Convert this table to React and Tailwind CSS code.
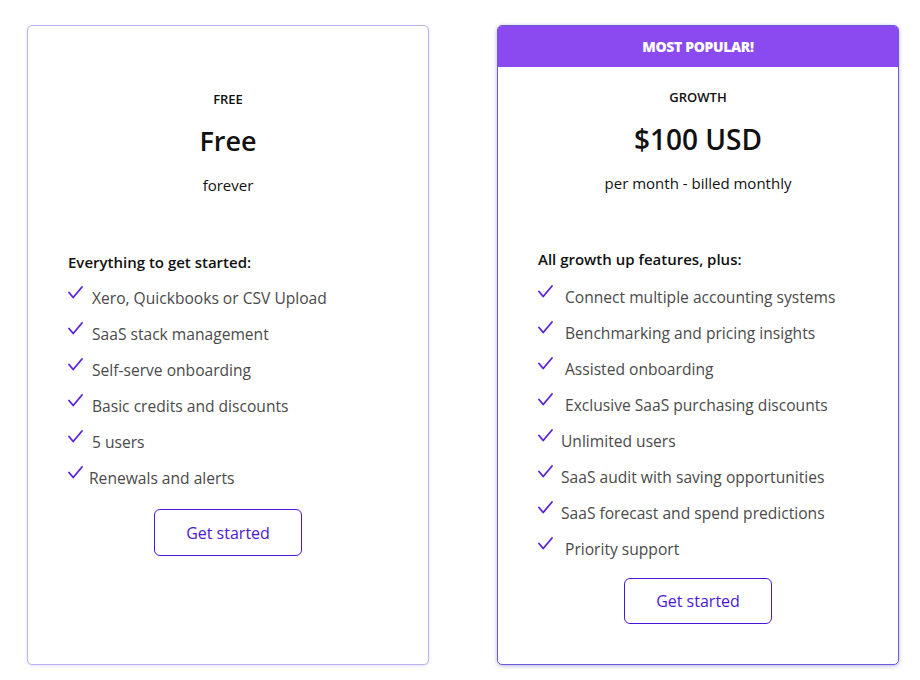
const FONT = { fontFamily: '"Open Sans", "Liberation Sans", sans-serif' };

const freeFeatures = [
  { text: 'Xero, Quickbooks or CSV Upload', pad: 'pl-[9px]' },
  { text: 'SaaS stack management', pad: 'pl-[9px]' },
  { text: 'Self-serve onboarding', pad: 'pl-[9px]' },
  { text: 'Basic credits and discounts', pad: 'pl-[9px]' },
  { text: '5 users', pad: 'pl-[9px]' },
  { text: 'Renewals and alerts', pad: 'pl-[6px]' },
];

const growthFeatures = [
  { text: 'Connect multiple accounting systems', pad: 'pl-[12px]' },
  { text: 'Benchmarking and pricing insights', pad: 'pl-[12px]' },
  { text: 'Assisted onboarding', pad: 'pl-[12px]' },
  { text: 'Exclusive SaaS purchasing discounts', pad: 'pl-[12px]' },
  { text: 'Unlimited users', pad: 'pl-[8px]' },
  { text: 'SaaS audit with saving opportunities', pad: 'pl-[8px]' },
  { text: 'SaaS forecast and spend predictions', pad: 'pl-[8px]' },
  { text: 'Priority support', pad: 'pl-[12px]' },
];

export default function App() {
  return (
    <div className="w-[920px] h-[680px] bg-white flex gap-[68px] pl-[27px] pt-[25px]" style={FONT}>
      <PlanCard
        label="FREE"
        price="Free"
        period="forever"
        heading="Everything to get started:"
        features={freeFeatures}
      />
      <PlanCard
        popular
        label="GROWTH"
        price="$100 USD"
        period="per month - billed monthly"
        heading="All growth up features, plus:"
        features={growthFeatures}
      />
    </div>
  );
}

function PlanCard({ popular, label, price, period, heading, features }) {
  return (
    <div
      className={
        popular
          ? 'w-[402px] h-[640px] rounded-[5px] border border-[#6a5bd6] bg-white overflow-hidden shadow-[0_1px_4px_rgba(60,40,160,0.35)] flex flex-col'
          : 'w-[402px] h-[640px] rounded-[5px] border border-[#bfb0f2] bg-white overflow-hidden shadow-[0_1px_3px_rgba(120,90,220,0.2)] flex flex-col'
      }
    >
      {popular && (
        <div className="h-[41px] bg-[#8a4af0] flex items-center justify-center text-white text-[14px] font-extrabold tracking-tight">
          MOST POPULAR!
        </div>
      )}
      <div className={popular ? 'flex flex-col items-center pt-[22px]' : 'flex flex-col items-center pt-[65px]'}>
        <div className="text-[13px] font-semibold text-[#111] leading-[16px]">{label}</div>
        <div className={popular ? 'mt-[18px] text-[28px] font-semibold text-[#111] leading-[32px]' : 'mt-[18px] text-[27px] font-semibold text-[#111] leading-[32px]'}>
          {price}
        </div>
        <div className="mt-[18px] text-[15px] text-[#111] leading-[20px]">{period}</div>
      </div>
      <div className={popular ? 'pl-[40px] mt-[56px]' : 'pl-[40px] mt-[57px]'}>
        <div className="text-[15px] font-semibold text-[#111] leading-[20px]">{heading}</div>
        <ul className={popular ? 'mt-[18px] flex flex-col gap-[16px]' : 'mt-[16px] flex flex-col gap-[16px]'}>
          {features.map((f) => (
            <li key={f.text} className="flex items-start h-[20px]">
              <Check />
              <span className={'text-[15.6px] text-[#4a4a4a] leading-[20px] whitespace-nowrap ' + f.pad}>{f.text}</span>
            </li>
          ))}
        </ul>
      </div>
      <div className={popular ? 'flex justify-center mt-[19px]' : 'flex justify-center mt-[21px]'}>
        <button
          type="button"
          className={
            popular
              ? 'w-[148px] h-[46px] rounded-[6px] border border-[#4b17d9] text-[#4b17d9] text-[16px] bg-white'
              : 'w-[148px] h-[47px] rounded-[6px] border border-[#4b17d9] text-[#4b17d9] text-[16px] bg-white'
          }
        >
          Get started
        </button>
      </div>
    </div>
  );
}

function Check() {
  return (
    <svg width="15" height="13" viewBox="0 0 15 13" className="shrink-0 -mt-[2px]">
      <path d="M1 6.5 L5.2 11.5 L14 1" fill="none" stroke="#5a22d9" strokeWidth="1.8" strokeLinecap="round" strokeLinejoin="round" />
    </svg>
  );
}
